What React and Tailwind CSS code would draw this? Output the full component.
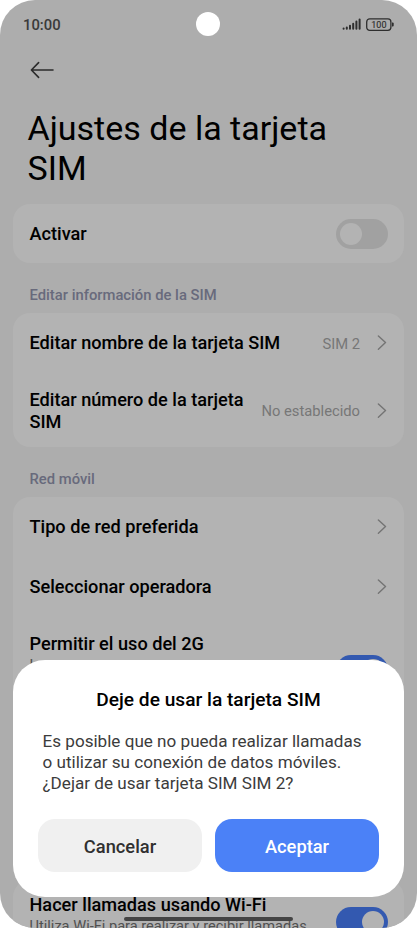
function BackArrow() {
  return (
    <svg className="h-6 w-6" viewBox="0 0 24 24" fill="none" stroke="#2b2b2b" strokeWidth="1.6" strokeLinecap="round" strokeLinejoin="round">
      <path d="M23 12H1.6M8.6 4.6L1.4 12l7.2 7.4" />
    </svg>
  );
}

function Chevron() {
  return (
    <svg className="h-4 w-2.5 shrink-0" viewBox="0 0 10 16" fill="none" stroke="#747474" strokeWidth="1.4" strokeLinecap="round" strokeLinejoin="round">
      <path d="M1.4 0.9L8.5 7.6l-7.1 6.7" />
    </svg>
  );
}

function Toggle({ on }) {
  return (
    <span
      className={
        on
          ? 'flex h-[30px] w-[52px] shrink-0 items-center justify-end rounded-full bg-[#3359b0] px-1'
          : 'flex h-[30px] w-[52px] shrink-0 items-center rounded-full bg-[#a1a1a1] px-1'
      }
    >
      <span className="h-[22px] w-[22px] rounded-full bg-[#b3b3b3]" />
    </span>
  );
}

function StatusBar() {
  return (
    <div className="flex h-12 items-center justify-between pl-[23px] pr-[23.5px]">
      <span className="w-32 pt-0.5 text-[14.8px] font-medium text-[#3a3a3a]">10:00</span>
      <span className="h-6 w-6 rounded-full bg-white" />
      <div className="flex w-32 items-center justify-end gap-[5px]">
        <svg className="h-3 w-[19px]" viewBox="0 0 19 12" stroke="#2e2e2e" strokeWidth="2" strokeLinecap="round">
          <path d="M1.6 10.8v-.3M4.8 10.8V9.4M8 10.8V7.8M11.2 10.8V5.8M14.4 10.8V3.6M17.6 10.8V1.4" />
        </svg>
        <svg className="h-[13px] w-7" viewBox="0 0 28 13">
          <rect x="0.7" y="0.9" width="24.2" height="11.4" rx="3" fill="none" stroke="#2e2e2e" strokeWidth="1.3" />
          <path d="M26 4.6h.6q1.1 0 1.1 1v2q0 1-1.1 1H26z" fill="#2e2e2e" />
          <text x="12.9" y="9.9" textAnchor="middle" fontSize="9" fill="#2e2e2e" stroke="#2e2e2e" strokeWidth="0.15">100</text>
        </svg>
      </div>
    </div>
  );
}

function Row({ title, value, className }) {
  return (
    <div className={`flex items-center pl-[16.5px] pr-[17px] ${className}`}>
      <span className="flex-1 text-[18.15px] leading-[22px] font-medium text-black">{title}</span>
      {value && <span className="mr-[17px] whitespace-nowrap pt-0.5 text-[14.75px] text-[#777]">{value}</span>}
      <Chevron />
    </div>
  );
}

function SectionTitle({ children }) {
  return <h2 className="flex h-[50px] items-center px-[29.5px] pt-3.5 text-[14.8px] font-medium text-[#686a7c]">{children}</h2>;
}

function Dialog() {
  return (
    <div className="absolute left-[13px] top-[660px] h-[237px] w-[391px] rounded-[32px] bg-white px-[25px] pt-7">
      <h3 className="text-center text-[19.15px] leading-6 font-medium text-black">Deje de usar la tarjeta SIM</h3>
      <p className="mt-[19px] h-[63px] pl-[4.5px] text-[17.1px] leading-[21px] whitespace-nowrap text-[#3c3c3c]">
        Es posible que no pueda realizar llamadas
        <br />
        o utilizar su conexión de datos móviles.
        <br />
        ¿Dejar de usar tarjeta SIM SIM 2?
      </p>
      <div className="mt-[25px] flex gap-[13px]">
        <button className="h-[53px] flex-1 rounded-[17px] bg-[#f0f0f0] pt-0.5 text-[18.3px] font-medium text-[#303030]">Cancelar</button>
        <button className="h-[53px] flex-1 rounded-[17px] bg-[#4b81f7] pt-0.5 text-[18.3px] font-medium text-white">Aceptar</button>
      </div>
    </div>
  );
}

export default function App() {
  return (
    <div className="h-[928px] w-[417px] overflow-hidden bg-white font-['Roboto',sans-serif]">
      <main className="relative h-full overflow-hidden rounded-[35px] bg-[#adadad]">
        <StatusBar />
        <div className="flex h-11 items-center pl-[30px]">
          <BackArrow />
        </div>
        <h1 className="h-28 pl-[27.5px] pt-[17px] text-[34px] leading-[39.5px] text-black">
          Ajustes de la tarjeta
          <br />
          SIM
        </h1>

        <section className="mx-[13px] flex h-[59px] items-center justify-between rounded-[17px] bg-[#b3b3b3] px-[16.5px]">
          <span className="pt-px text-[18.15px] font-medium text-black">Activar</span>
          <Toggle />
        </section>

        <SectionTitle>Editar información de la SIM</SectionTitle>
        <section className="mx-[13px] h-[134px] rounded-[17px] bg-[#b3b3b3]">
          <Row title="Editar nombre de la tarjeta SIM" value="SIM 2" className="h-[60px]" />
          <Row title="Editar número de la tarjeta SIM" value="No establecido" className="h-[75px]" />
        </section>

        <SectionTitle>Red móvil</SectionTitle>
        <section className="mx-[13px] h-[330px] rounded-[17px] bg-[#b3b3b3]">
          <Row title="Tipo de red preferida" className="h-[60px]" />
          <Row title="Seleccionar operadora" className="h-[59px]" />
          <div className="flex justify-between px-[16.5px] pt-[17px]">
            <div>
              <p className="text-[18.15px] leading-[22px] font-medium text-black">Permitir el uso del 2G</p>
              <p className="text-[14.6px] leading-5 text-[#505050]">L</p>
            </div>
            <span className="pt-[22px]">
              <Toggle on />
            </span>
          </div>
        </section>

        <section className="mx-[13px] mt-[53px] flex h-20 justify-between rounded-[17px] bg-[#b3b3b3] px-[16.5px]">
          <div className="whitespace-nowrap pt-3.5">
            <p className="text-[18.15px] leading-[22px] font-medium text-black">Hacer llamadas usando Wi-Fi</p>
            <p className="text-[14.6px] leading-5 text-[#505050]">Utiliza Wi-Fi para realizar y recibir llamadas</p>
          </div>
          <span className="pt-[27px]">
            <Toggle on />
          </span>
        </section>

        <Dialog />
        <div className="absolute left-[124px] top-[917px] h-1 w-[169px] rounded-full bg-[#444]" />
      </main>
    </div>
  );
}
